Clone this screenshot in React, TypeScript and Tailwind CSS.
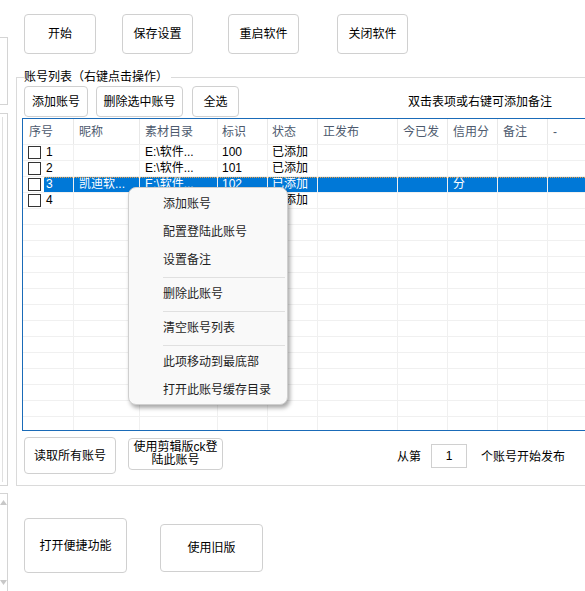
import React from "react";

const font = "font-['Liberation_Sans','Noto_Sans_CJK_SC',sans-serif]";

const columns = [
  { key: "no", label: "序号", w: "w-[51px]", pl: "pl-[6px]" },
  { key: "nick", label: "昵称", w: "w-[66px]", pl: "pl-[5px]" },
  { key: "dir", label: "素材目录", w: "w-[78px]", pl: "pl-[5px]" },
  { key: "tag", label: "标识", w: "w-[50px]", pl: "pl-[4px]" },
  { key: "state", label: "状态", w: "w-[50px]", pl: "pl-[4px]" },
  { key: "posting", label: "正发布", w: "w-[80px]", pl: "pl-[5px]" },
  { key: "today", label: "今已发", w: "w-[50px]", pl: "pl-[5px]" },
  { key: "credit", label: "信用分", w: "w-[50px]", pl: "pl-[5px]" },
  { key: "note", label: "备注", w: "w-[50px]", pl: "pl-[5px]" },
  { key: "more", label: "-", w: "w-[120px]", pl: "pl-[5px]" },
];

type Row = Record<string, string>;

const rows: Row[] = [
  { no: "1", nick: "", dir: "E:\\软件...", tag: "100", state: "已添加" },
  { no: "2", nick: "", dir: "E:\\软件...", tag: "101", state: "已添加" },
  { no: "3", nick: "凯迪软...", dir: "E:\\软件...", tag: "102", state: "已添加", credit: "分" },
  { no: "4", nick: "", dir: "E:\\软件...", tag: "103", state: "已添加" },
];

const menuItems: (string | null)[] = [
  "添加账号",
  "配置登陆此账号",
  "设置备注",
  null,
  "删除此账号",
  null,
  "清空账号列表",
  null,
  "此项移动到最底部",
  "打开此账号缓存目录",
];

function Btn({ className, children }: { className: string; children: React.ReactNode }) {
  return (
    <button className={`flex items-center justify-center rounded-[4px] border border-[#d0d0d0] bg-white text-[12px] text-black ${className}`}>
      {children}
    </button>
  );
}

function Checkbox() {
  return <span className="block w-[13px] h-[13px] border border-[#333333] bg-white" />;
}

function TableRow({ row, selected }: { row?: Row; selected?: boolean }) {
  return (
    <div className="relative flex h-[16px] border-b border-[#f0f0f0] text-[12px] leading-[15px]">
      {columns.map((c, i) =>
        i === 0 ? (
          <div key={c.key} className={`flex shrink-0 h-full border-r border-[#f0f0f0] ${c.w}`}>
            <div className="flex items-center pl-[5px] w-[21px] bg-white">{row && <Checkbox />}</div>
            <div className={`flex-1 pl-[2px] ${selected ? "bg-[#0078d7] text-white" : "text-black"}`}>{row?.no}</div>
          </div>
        ) : (
          <div
            key={c.key}
            className={`shrink-0 h-full border-r border-[#f0f0f0] whitespace-nowrap overflow-hidden ${c.w} ${c.pl} ${selected ? "bg-[#0078d7] text-white" : "text-black"}`}
          >
            {row?.[c.key]}
          </div>
        )
      )}
      {selected && <div className="absolute left-[21px] right-0 top-0 border-t border-dotted border-[#f0a040]" />}
    </div>
  );
}

export default function App() {
  return (
    <div className={`relative flex w-[585px] h-[591px] overflow-hidden bg-white ${font}`}>
      {/* clipped panels on the left edge */}
      <div className="flex flex-col w-[8px] shrink-0">
        <div className="mt-[37px] h-[68px] border-t border-r border-b border-[#d4d4d4]" />
        <div className="mt-[8px] h-[373px] border-t border-r border-b border-[#d4d4d4] flex">
          <div className="mt-[3px] mb-[3px] w-[3px] border-r border-[#e0e0e0]" />
        </div>
        <div className="mt-[7px] flex-1 border-t border-r border-[#d4d4d4] flex flex-col items-center justify-between py-[6px]">
          <svg width="7" height="5" viewBox="0 0 7 5">
            <path d="M0 5 L3.5 0 L7 5 Z" fill="#c8c8c8" />
          </svg>
          <svg width="7" height="5" viewBox="0 0 7 5">
            <path d="M0 0 L3.5 5 L7 0 Z" fill="#c8c8c8" />
          </svg>
        </div>
      </div>

      <div className="flex flex-col ml-[8px] shrink-0">
        {/* top buttons */}
        <div className="flex pt-[14px] pl-[8px]">
          <Btn className="w-[72px] h-[40px]">开始</Btn>
          <Btn className="ml-[26px] w-[71px] h-[40px]">保存设置</Btn>
          <Btn className="ml-[35px] w-[71px] h-[40px]">重启软件</Btn>
          <Btn className="ml-[38px] w-[71px] h-[40px]">关闭软件</Btn>
        </div>

        {/* account list group */}
        <div className="relative mt-[23px] w-[620px] h-[409px] border-t border-l border-b border-[#dadada]">
          <span className="absolute left-[7px] -top-[9px] bg-white pr-[3px] text-[12px] leading-[16px] text-black">账号列表（右键点击操作）</span>
          <div className="flex items-center pt-[8px] pl-[7px]">
            <Btn className="w-[64px] h-[31px]">添加账号</Btn>
            <Btn className="ml-[8px] w-[87px] h-[31px]">删除选中账号</Btn>
            <Btn className="ml-[9px] w-[47px] h-[31px]">全选</Btn>
            <span className="ml-[169px] text-[12px] text-black">双击表项或右键可添加备注</span>
          </div>

          <div className="ml-[5px] mt-[1px] w-[610px] h-[313px] border border-[#1a6bb8] overflow-hidden">
            <div className="flex h-[26px] border-b border-[#f0f0f0] text-[12px] text-[#4d5a6e]">
              {columns.map((c) => (
                <div key={c.key} className={`shrink-0 flex items-center h-full border-r border-[#e8e8e8] ${c.w} ${c.pl}`}>
                  {c.label}
                </div>
              ))}
            </div>
            {rows.map((r, i) => (
              <TableRow key={r.no} row={r} selected={i === 2} />
            ))}
            {Array.from({ length: 15 }).map((_, i) => (
              <TableRow key={`e${i}`} />
            ))}
          </div>

          <div className="flex items-start mt-[6px] pl-[7px] text-[12px] text-black">
            <Btn className="w-[92px] h-[37px]">读取所有账号</Btn>
            <Btn className="ml-[12px] mt-[1px] w-[95px] h-[32px] leading-[13px] text-center">
              使用剪辑版ck登
              <br />
              陆此账号
            </Btn>
            <span className="ml-[174px] mt-[11px]">从第</span>
            <div className="ml-[10px] mt-[7px] w-[36px] h-[24px] border border-[#d0d0d0] flex items-center justify-center">1</div>
            <span className="ml-[14px] mt-[11px]">个账号开始发布</span>
          </div>
        </div>

        {/* bottom buttons */}
        <div className="flex items-start mt-[32px] pl-[8px]">
          <Btn className="w-[103px] h-[55px]">打开便捷功能</Btn>
          <Btn className="ml-[33px] mt-[6px] w-[103px] h-[48px]">使用旧版</Btn>
        </div>
      </div>

      {/* context menu */}
      <div className="absolute left-[128px] top-[187px] w-[160px] h-[218px] rounded-[8px] border border-[#cfcfcf] bg-[#f9f9f9] pt-[2px] shadow-[2px_3px_4px_rgba(0,0,0,0.35)] text-[12px] text-[#1e1e1e]">
        {menuItems.map((m, i) =>
          m === null ? (
            <div key={i} className="h-[6px] flex items-center pl-[34px] pr-[2px]">
              <div className="w-full border-t border-[#e0e0e0]" />
            </div>
          ) : (
            <div key={i} className="h-[28px] flex items-center pl-[34px]">
              {m}
            </div>
          )
        )}
      </div>
    </div>
  );
}
